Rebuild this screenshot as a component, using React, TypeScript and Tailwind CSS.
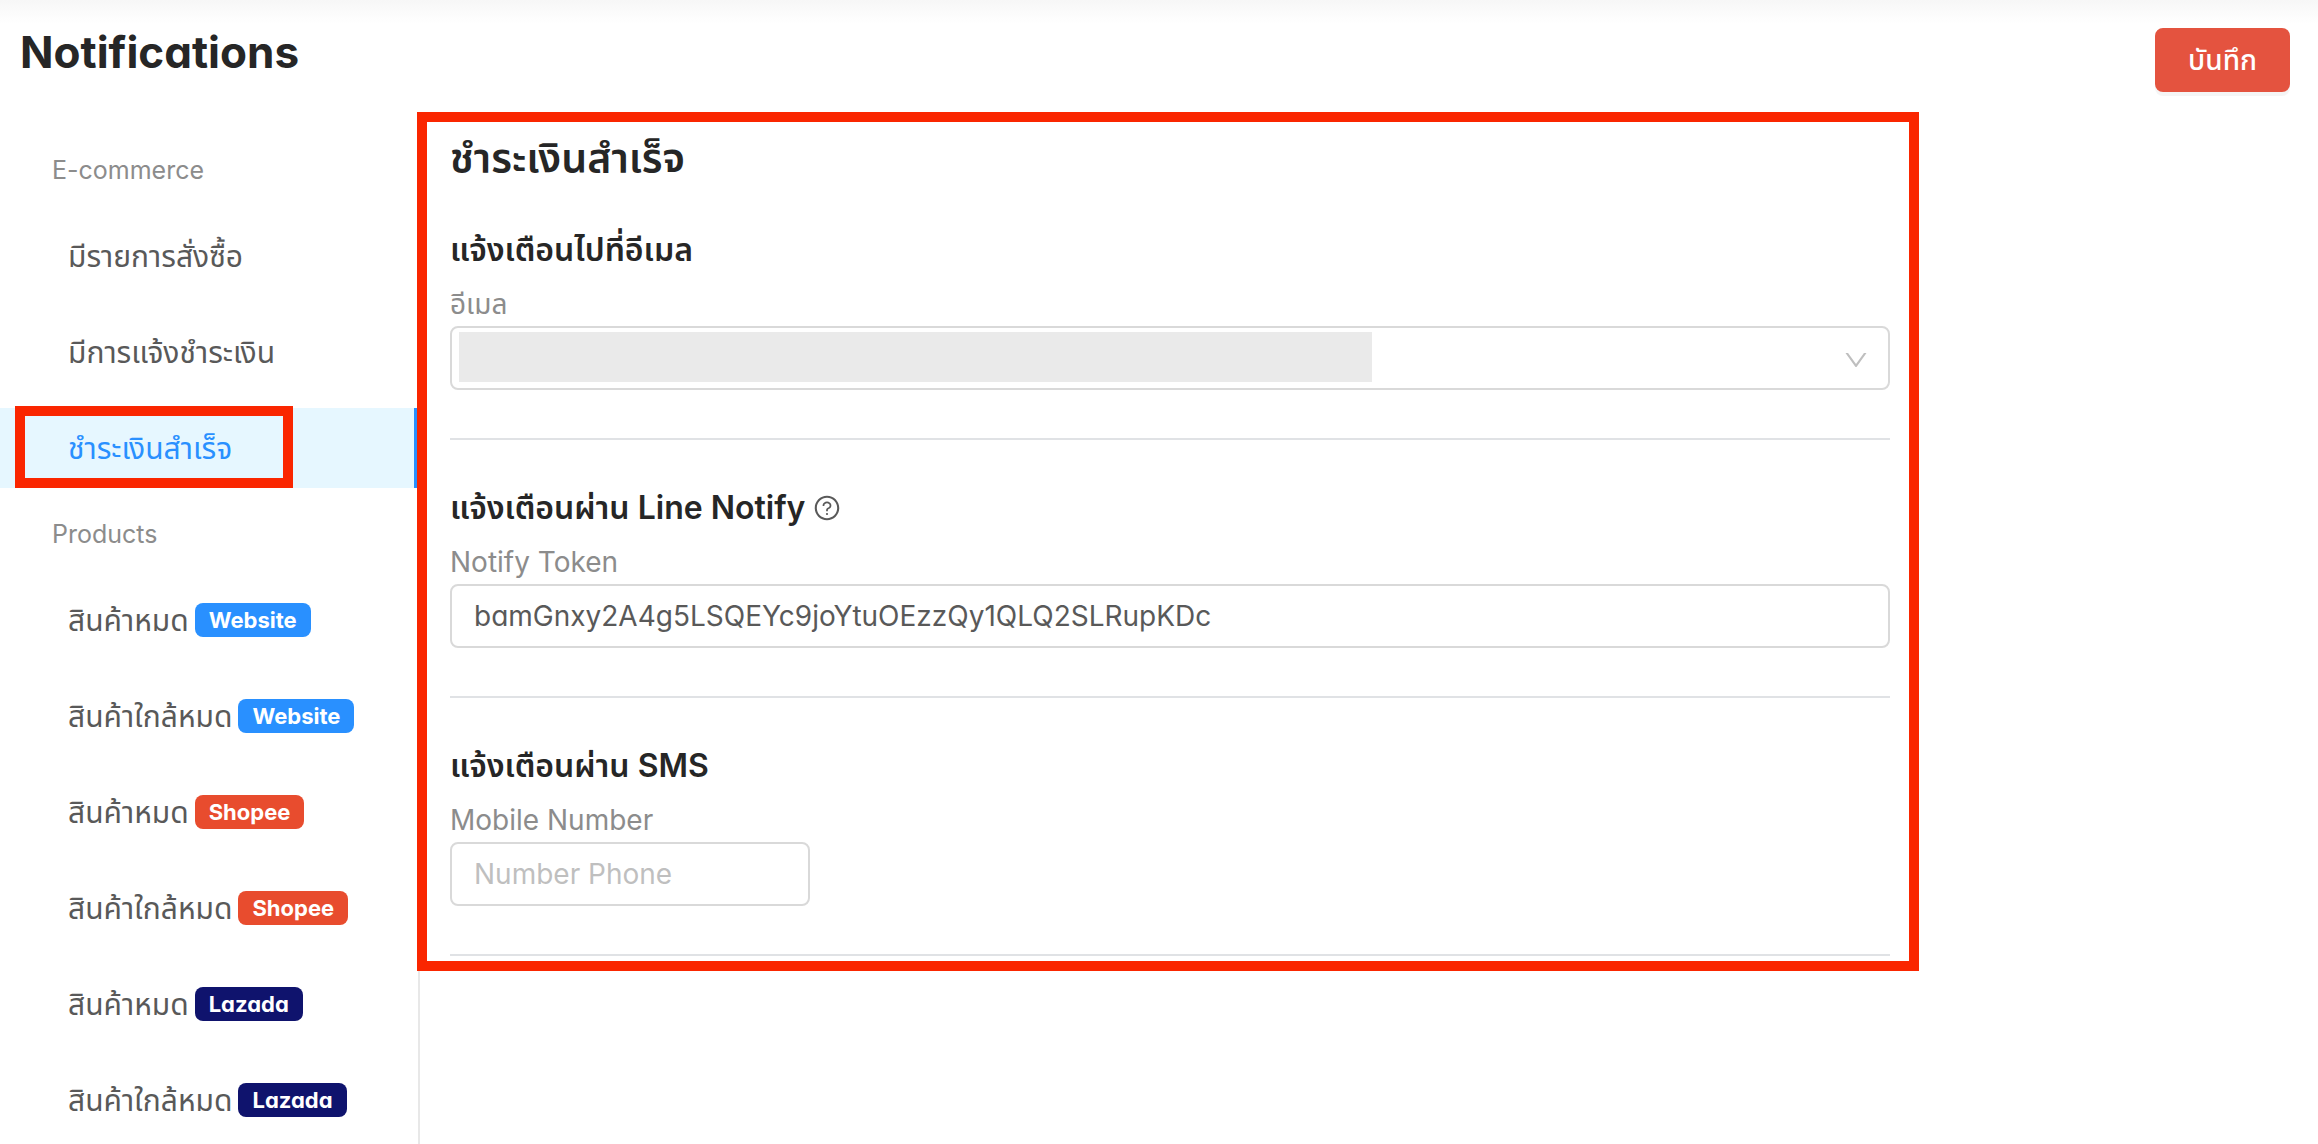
import { useState } from "react";
import { AiOutlineDown, AiOutlineQuestionCircle } from "react-icons/ai";

type Item = {
  path: string;
  name: string;
  channel?: "Website" | "Shopee" | "Lazada";
};

const ecommerce: Item[] = [
  { path: "#new-order", name: "มีรายการสั่งซื้อ" },
  { path: "#payment-notice", name: "มีการแจ้งชำระเงิน" },
  { path: "#payment-success", name: "ชำระเงินสำเร็จ" },
];

const products: Item[] = [
  { path: "#website-out", name: "สินค้าหมด", channel: "Website" },
  { path: "#website-low", name: "สินค้าใกล้หมด", channel: "Website" },
  { path: "#shopee-out", name: "สินค้าหมด", channel: "Shopee" },
  { path: "#shopee-low", name: "สินค้าใกล้หมด", channel: "Shopee" },
  { path: "#lazada-out", name: "สินค้าหมด", channel: "Lazada" },
  { path: "#lazada-low", name: "สินค้าใกล้หมด", channel: "Lazada" },
];

const channelColors = {
  Website: "bg-[#2990ff]",
  Shopee: "bg-[#e84c2e]",
  Lazada: "bg-[#0f136d]",
};

const fieldClass = "h-16 rounded-lg border-2 border-[#d9d9d9] bg-white text-[28px] text-[#595959] outline-none";
const labelClass = "block text-[28px] leading-[44px] text-[#8c8c8c]";
const titleClass = "mb-3 flex items-center gap-2 text-[32px] leading-10 font-semibold";

function MenuItem({ data, active }: { data: Item; active?: boolean }) {
  return (
    <li className="relative mb-4">
      <a
        href={data.path}
        className={
          active
            ? "flex h-20 items-center gap-1.5 border-r-4 border-[#2990ff] bg-[#e6f7ff] pl-17 text-[#2990ff]"
            : "flex h-20 items-center gap-1.5 pl-17 text-[#595959]"
        }
      >
        <span>{data.name}</span>
        {data.channel && (
          <span className={`rounded-lg px-3.5 text-[22px] leading-[34px] font-bold text-white ${channelColors[data.channel]}`}>
            {data.channel}
          </span>
        )}
      </a>
      {active && (
        <span className="pointer-events-none absolute -top-0.5 bottom-0 left-[15px] w-[278px] border-10 border-[#fa2600]" />
      )}
    </li>
  );
}

function MenuGroup({ title, items, current }: { title: string; items: Item[]; current: string }) {
  return (
    <div>
      <h2 className="-mt-2 mb-2 pl-13 text-[25px] leading-[76px] text-[#8c8c8c]">{title}</h2>
      <ul className="text-[30px]">
        {items.map((item) => (
          <MenuItem key={item.path} data={item} active={item.path === current} />
        ))}
      </ul>
    </div>
  );
}

export default function App() {
  const [token, setToken] = useState("bamGnxy2A4g5LSQEYc9joYtuOEzzQy1QLQ2SLRupKDc");
  const [phone, setPhone] = useState("");

  return (
    <div className="flex h-screen flex-col overflow-hidden bg-white font-[Inter,'Noto_Sans_Thai','Noto_Sans',sans-serif] text-[#262626] [font-feature-settings:'cv11']">
      <header className="flex items-start justify-between bg-linear-to-b from-[#f7f7f7] to-white to-[24px] pt-7 pr-7 pl-5">
        <h1 className="text-[44px] leading-[48px] font-bold">Notifications</h1>
        <button type="button" className="h-16 rounded-lg bg-[#e4533f] px-[33px] text-[28px] font-medium text-white shadow-[0_4px_0_rgba(0,0,0,0.04)]">
          บันทึก
        </button>
      </header>

      <div className="mt-5 flex min-h-0 flex-1">
        <nav className="w-[420px] shrink-0 overflow-y-auto border-r-2 border-[#e8e8e8] pt-7 [scrollbar-width:none]">
          <MenuGroup title="E-commerce" items={ecommerce} current="#payment-success" />
          <MenuGroup title="Products" items={products} current="#payment-success" />
        </nav>

        <main className="relative -ml-[3px] w-full max-w-[1502px] self-start border-10 border-[#fa2600] bg-white pt-1.5 pr-[19px] pb-[5px] pl-[23px]">
          <h2 className="mb-[42px] text-[41px] leading-[60px] font-semibold">ชำระเงินสำเร็จ</h2>

          <section className="mb-12 border-b-2 border-[#e0e2e5] pb-12">
            <h3 className={titleClass}>แจ้งเตือนไปที่อีเมล</h3>
            <label htmlFor="email" className={labelClass}>อีเมล</label>
            <div className="relative">
              <select id="email" className={`${fieldClass} block w-full appearance-none px-5.5`}>
                <option value=""></option>
              </select>
              <span className="pointer-events-none absolute top-1.5 left-[9px] h-[50px] w-[63.4%] bg-[#eaeaea]" />
              <AiOutlineDown className="pointer-events-none absolute top-5 right-5 size-7 text-[#bfbfbf]" />
            </div>
          </section>

          <section className="mb-12 border-b-2 border-[#e0e2e5] pb-12">
            <h3 className={titleClass}>
              แจ้งเตือนผ่าน Line Notify
              <AiOutlineQuestionCircle className="size-7 text-[#595959]" />
            </h3>
            <label htmlFor="token" className={labelClass}>Notify Token</label>
            <input
              id="token"
              type="text"
              value={token}
              onChange={(e) => setToken(e.target.value)}
              className={`${fieldClass} block w-full px-5.5`}
            />
          </section>

          <section className="border-b-2 border-[#e0e2e5] pb-12">
            <h3 className={titleClass}>แจ้งเตือนผ่าน SMS</h3>
            <label htmlFor="phone" className={labelClass}>Mobile Number</label>
            <input
              id="phone"
              type="tel"
              placeholder="Number Phone"
              value={phone}
              onChange={(e) => setPhone(e.target.value)}
              className={`${fieldClass} block w-1/4 px-5.5 placeholder:text-[#bfbfbf]`}
            />
          </section>
        </main>
      </div>
    </div>
  );
}
